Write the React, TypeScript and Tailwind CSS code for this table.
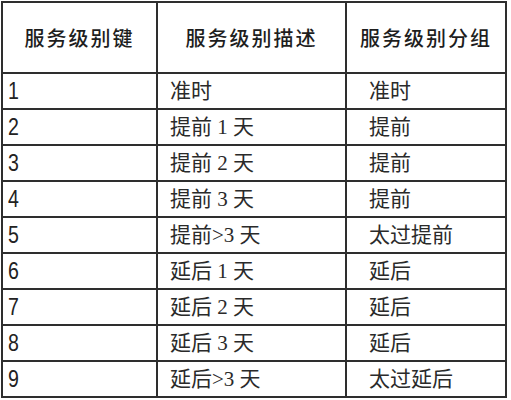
const rows = [
  { key: "1", desc: "准时", group: "准时" },
  { key: "2", desc: "提前 1 天", group: "提前" },
  { key: "3", desc: "提前 2 天", group: "提前" },
  { key: "4", desc: "提前 3 天", group: "提前" },
  { key: "5", desc: "提前>3 天", group: "太过提前" },
  { key: "6", desc: "延后 1 天", group: "延后" },
  { key: "7", desc: "延后 2 天", group: "延后" },
  { key: "8", desc: "延后 3 天", group: "延后" },
  { key: "9", desc: "延后>3 天", group: "太过延后" },
];

export default function App() {
  return (
    <div className="w-[511px] h-[400px] bg-white text-[#222] overflow-hidden pt-[1px] pl-[1px]">
      <table className="table-fixed border-collapse border-2 border-[#2e2e2e] w-[506px]">
        <colgroup>
          <col className="w-[155px]" />
          <col className="w-[189px]" />
          <col className="w-[160px]" />
        </colgroup>
        <thead>
          <tr className="h-[71px] font-['Noto_Sans_CJK_SC',sans-serif] text-[20px] tracking-[2px] font-medium text-[#1e1e1e]">
            <th className="border-2 border-[#2e2e2e] text-center align-middle font-medium">服务级别键</th>
            <th className="border-2 border-[#2e2e2e] text-center align-middle font-medium">服务级别描述</th>
            <th className="border-2 border-[#2e2e2e] text-center align-middle font-medium">服务级别分组</th>
          </tr>
        </thead>
        <tbody>
          {rows.map((r) => (
            <tr key={r.key} className="h-[36px]">
              <td className="border-2 border-[#2e2e2e] pl-[5px] align-middle leading-none font-['Liberation_Sans_Narrow','Liberation_Sans',sans-serif] text-[23px]">
                <span className="inline-block origin-left scale-x-[0.85]">{r.key}</span>
              </td>
              <td className="border-2 border-[#2e2e2e] pl-[12px] align-middle leading-none font-['Liberation_Serif','Noto_Sans_CJK_SC',serif] text-[21px] text-[#2a2a2a]">
                {r.desc}
              </td>
              <td className="border-2 border-[#2e2e2e] pl-[22px] align-middle leading-none font-['Liberation_Serif','Noto_Sans_CJK_SC',serif] text-[21px] text-[#2a2a2a]">
                {r.group}
              </td>
            </tr>
          ))}
        </tbody>
      </table>
    </div>
  );
}
